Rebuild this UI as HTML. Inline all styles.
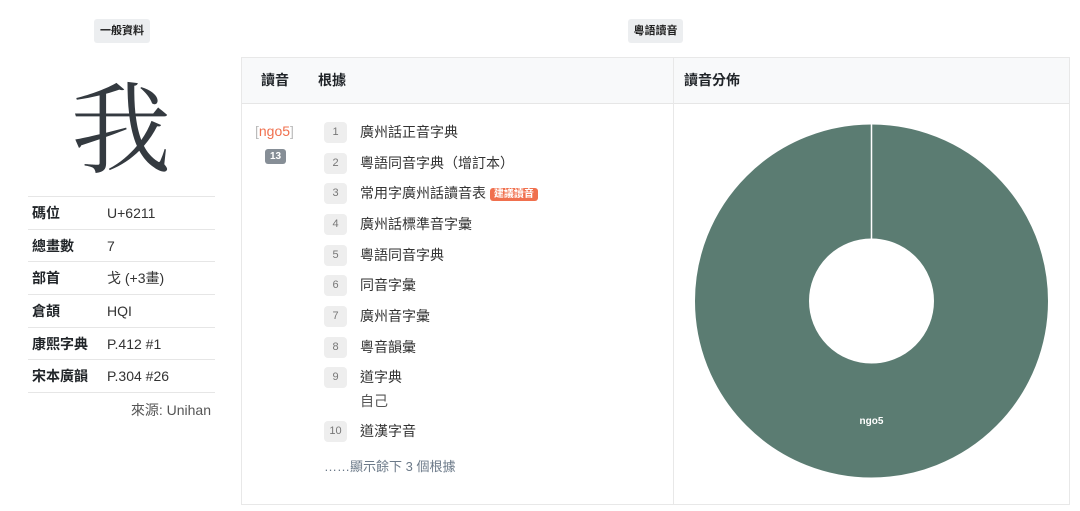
<!DOCTYPE html>
<html><head><meta charset="utf-8"><style>
*{box-sizing:border-box;margin:0;padding:0}
body{width:1080px;height:511px;background:#fff;font-family:"Liberation Sans","Noto Sans CJK TC",sans-serif;color:#212529;position:relative;overflow:hidden}
.abs{position:absolute}
.pill{position:absolute;background:#eceef0;border-radius:3px;font-size:11px;font-weight:bold;height:24px;line-height:24px;text-align:center;color:#222}
.row{position:absolute;left:28px;width:187px;height:33px;border-top:1px solid #e6e6e6;font-size:14px;line-height:32px}
.row b{position:absolute;left:4px}
.row span{position:absolute;left:79px;color:#333}
.card{position:absolute;left:241px;top:57px;width:829px;height:448px;border:1px solid #e8e8e8}
.hdr{position:absolute;left:0;top:0;width:100%;height:46px;background:#f8f9fa;border-bottom:1px solid #e6e6e6;font-size:14px;font-weight:bold;line-height:44px}
.num{position:absolute;left:82px;width:23px;height:21px;background:#eeeeee;border-radius:4px;font-size:11px;color:#777;text-align:center;line-height:21px}
.it{position:absolute;left:118px;font-size:14px;color:#333;line-height:21px}
</style></head><body>
<div class="pill" style="left:94px;top:19px;width:56px">一般資料</div>
<div class="pill" style="left:628px;top:19px;width:55px">粵語讀音</div>
<div class="abs" style="left:66px;top:62px;width:110px;text-align:center;font-family:'Noto Serif CJK SC',serif;font-size:100px;line-height:120px;color:#343a40">我</div>
<div class="row" style="top:196px"><b>碼位</b><span>U+6211</span></div>
<div class="row" style="top:229px"><b>總畫數</b><span>7</span></div>
<div class="row" style="top:261px"><b>部首</b><span>戈 (+3畫)</span></div>
<div class="row" style="top:294px"><b>倉頡</b><span>HQI</span></div>
<div class="row" style="top:327px"><b>康熙字典</b><span>P.412 #1</span></div>
<div class="row" style="top:359px"><b>宋本廣韻</b><span>P.304 #26</span></div>
<div class="row" style="top:392px;height:1px"></div>
<div class="abs" style="left:100px;top:400px;width:111px;text-align:right;font-size:14px;color:#555">來源: Unihan</div>
<div class="card">
 <div class="hdr"><span class="abs" style="left:19px">讀音</span><span class="abs" style="left:76px">根據</span><span class="abs" style="left:442px">讀音分佈</span></div>
 <div class="abs" style="left:431px;top:0;width:1px;height:446px;background:#e8e8e8"></div>
 <div class="abs" style="left:13px;top:65px;font-size:14px;color:#f0704e"><span style="color:#bbb">[</span>ngo5<span style="color:#bbb">]</span></div>
 <div class="abs" style="left:23px;top:91px;width:21px;height:15px;background:#868e96;border-radius:3px;color:#fff;font-size:10px;font-weight:bold;text-align:center;line-height:15px">13</div>
 <div class="num" style="top:64px">1</div><div class="it" style="top:64px">廣州話正音字典</div>
 <div class="num" style="top:95px">2</div><div class="it" style="top:95px">粵語同音字典（增訂本）</div>
 <div class="num" style="top:125px">3</div><div class="it" style="top:125px">常用字廣州話讀音表 <span style="background:#f0704e;color:#fff;font-size:10px;font-weight:bold;border-radius:3px;padding:1px 4px;vertical-align:1px">建議讀音</span></div>
 <div class="num" style="top:156px">4</div><div class="it" style="top:156px">廣州話標準音字彙</div>
 <div class="num" style="top:187px">5</div><div class="it" style="top:187px">粵語同音字典</div>
 <div class="num" style="top:217px">6</div><div class="it" style="top:217px">同音字彙</div>
 <div class="num" style="top:248px">7</div><div class="it" style="top:248px">廣州音字彙</div>
 <div class="num" style="top:279px">8</div><div class="it" style="top:279px">粵音韻彙</div>
 <div class="num" style="top:309px">9</div><div class="it" style="top:309px">道字典</div>
 <div class="it" style="top:333px;color:#555">自己</div>
 <div class="num" style="top:363px">10</div><div class="it" style="top:363px">道漢字音</div>
 <div class="abs" style="left:82px;top:398px;font-size:13px;color:#6c7a89">……顯示餘下 3 個根據</div>
</div>
<svg class="abs" style="left:0;top:0" width="1080" height="511">
 <circle cx="871.5" cy="301" r="119.5" fill="none" stroke="#5b7c72" stroke-width="114"/>
 <line x1="871.5" y1="124" x2="871.5" y2="240" stroke="#fff" stroke-width="1.5"/>
 <text x="871.5" y="424" font-size="10" font-weight="bold" fill="#fff" text-anchor="middle" font-family="Liberation Sans,sans-serif">ngo5</text>
</svg>
</body></html>
